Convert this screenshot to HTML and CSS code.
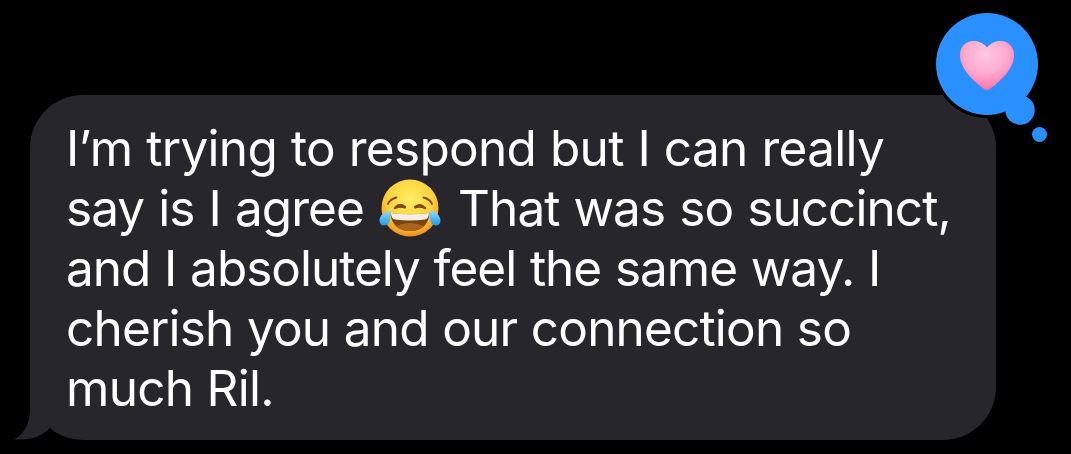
FILE: index.html
```
<!DOCTYPE html>
<html lang="en">
<head>
	<meta charset="utf-8">
	<title>Messages</title>
	<link rel="stylesheet" href="styles.css">
</head>
<body>
	<div class="message">

		<div class="bubble">
			<span class="line line-1">I’m trying to respond but I can really</span>
			<span class="line line-2">say is I agree
				<svg class="emoji" viewBox="0 0 62 58" role="img" aria-label="face with tears of joy">
					<defs>
						<radialGradient id="face" cx="50%" cy="35%" r="66%">
							<stop offset="0" stop-color="#ffed66"/>
							<stop offset="0.55" stop-color="#fdd53f"/>
							<stop offset="0.85" stop-color="#f7ac28"/>
							<stop offset="1" stop-color="#e98a1c"/>
						</radialGradient>
						<linearGradient id="tear" x1="0" y1="0" x2="0" y2="1">
							<stop offset="0" stop-color="#8edcff"/>
							<stop offset="1" stop-color="#2498e2"/>
						</linearGradient>
					</defs>
					<circle cx="31" cy="29" r="28.5" fill="url(#face)"/>
					<g fill="none" stroke="#804817" stroke-linecap="round">
						<path stroke-width="1.8" d="M9 25Q11 20 17.500 18.500M53 25Q51 20 44.500 18.500"/>
						<path stroke-width="2.4" d="M16 29Q21 23.500 26.500 28.500Q21 26.500 16 29M46 29Q41 23.500 35.500 28.500Q41 26.500 46 29"/>
					</g>
					<path fill="#7c4310" d="M11.500 34Q31 36.500 50.500 34C50 45 43 52 31 52S12 45 11.500 34Z"/>
					<path fill="#a9651c" d="M17 47Q31 41 45 47Q40 52 31 52T17 47Z"/>
					<path fill="#f5eee6" d="M12 34Q31 36.500 50 34Q50 39.500 46 40.500Q31 42.500 16 40.500Q12 39.500 12 34Z"/>
					<path fill="url(#tear)" d="M11.500 31.500C5 32.500.5 37 .5 41.500C.5 45 3 47 6 46.500C10.500 46 12 40 11.500 31.500ZM50.500 31.500C57 32.500 61.500 37 61.500 41.500C61.500 45 59 47 56 46.500C51.500 46 50 40 50.500 31.500Z"/>
				</svg>
				That was so succinct,</span>
			<span class="line line-3">and I absolutely feel the same way. I</span>
			<span class="line line-4">cherish you and our connection so</span>
			<span class="line line-5">much Ril.</span>
		</div>

		<svg class="tail" viewBox="0 0 72 30" aria-hidden="true">
			<path class="tail-gap" d="M0 0H72V30H0Z"/>
			<path class="tail-fill" d="M16 0C15.500 14 10 25 0 29Q22 32 36 18Q49 30 72 30V0Z"/>
		</svg>

		<svg class="reaction" viewBox="0 0 120 140" role="img" aria-label="heart reaction">
			<defs>
				<radialGradient id="heart" cx="48%" cy="28%" r="75%">
					<stop offset="0" stop-color="#ffc7e0"/>
					<stop offset="0.5" stop-color="#ffacd0"/>
					<stop offset="0.85" stop-color="#ff80b4"/>
					<stop offset="1" stop-color="#ff69a5"/>
				</radialGradient>
			</defs>
			<g class="reaction-ring">
				<circle cx="57" cy="54" r="51"/>
				<circle cx="90" cy="100" r="14.700"/>
			</g>
			<circle cx="57" cy="54" r="51"/>
			<circle cx="90" cy="100" r="14.700"/>
			<circle cx="109.500" cy="124.500" r="7.500"/>
			<path fill="url(#heart)" d="M57 37.500C53 32.500 48 31 43.500 31C35.500 31 30 37 30 45C30 58 42 70 53.500 78.500Q57 81.500 60.500 78.500C72 70 84 58 84 45C84 37 78.500 31 70.500 31C66 31 61 32.500 57 37.500Z"/>
		</svg>

	</div>
</body>
</html>
```
FILE: styles.css
```
html,body{
	height: 100%;
	margin: 0px;
	padding: 0px;
}

body{
	background-color: #000;
	font-family: Inter, "Liberation Sans", sans-serif;
	overflow: hidden;
}

.message{
	position: relative;
	box-sizing: border-box;
	height: 454px;
	padding: 95px 75px 14px 30px;
}

.bubble{
	box-sizing: border-box;
	height: 345px;
	padding: 23px 36px 22px;
	border-radius: 53px 53px 53px 0px;
	background-color: #27262b;
	color: #FFF;
	font-size: 49.5px;
	line-height: 60px;
}

.line{
	display: block;
	white-space: nowrap;
}

.line-1{
	letter-spacing: -0.7px;
	word-spacing: 0.6px;
}

.line-2{
	letter-spacing: -0.92px;
	word-spacing: 1px;
}

.line-3{
	letter-spacing: -1px;
	word-spacing: 0.8px;
}

.line-4{
	letter-spacing: -0.82px;
	word-spacing: 0.4px;
}

.line-5{
	letter-spacing: -0.7px;
}

.emoji{
	width: 62px;
	height: 58px;
	margin: -10px 3px -10px 1px;
	vertical-align: -1px;
}

/* small tail that hangs off the bottom left corner */
.tail{
	position: absolute;
	left: 14px;
	bottom: 14px;
	width: 72px;
	height: 30px;
}

.tail-gap{
	fill: #000;
}

.tail-fill{
	fill: #27262b;
}

/* tapback, sits over the top right corner */
.reaction{
	position: absolute;
	top: 10px;
	right: 21px;
	width: 120px;
	height: 140px;
	fill: #2b90ff;
}

.reaction-ring{
	fill: #000;
	stroke: #000;
	stroke-width: 6px;
}
```
